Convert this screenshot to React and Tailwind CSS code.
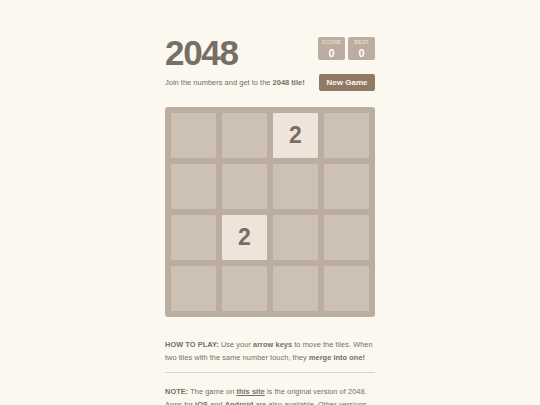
import React from "react";

const board = [
  [0, 0, 2, 0],
  [0, 0, 0, 0],
  [0, 2, 0, 0],
  [0, 0, 0, 0],
];

function ScoreBox({ label, value }) {
  return (
    <div className="bg-[#bbada0] rounded-[2px] w-[27px] h-[23px] flex flex-col items-center pt-[3px]">
      <span className="text-[5.5px] leading-none text-[#eee4da] uppercase">{label}</span>
      <span className="text-[11px] leading-none font-bold text-white mt-[2px]">{value}</span>
    </div>
  );
}

export default function App() {
  return (
    <div
      className="min-h-screen bg-[#faf8ef] text-[#776e65] overflow-hidden"
      style={{ fontFamily: '"Liberation Sans", Arial, sans-serif' }}
    >
      <div className="w-[210px] mx-auto pt-[30px]">
        {/* Header */}
        <div className="flex justify-between items-start">
          <h1 className="text-[35px] font-bold leading-[45px] tracking-[-1.3px]">2048</h1>
          <div className="flex gap-[3px] mt-[7px]">
            <ScoreBox label="Score" value="0" />
            <ScoreBox label="Best" value="0" />
          </div>
        </div>

        <div className="flex justify-between items-center mt-[-1px]">
          <p className="text-[7.5px]">
            Join the numbers and get to the <b>2048 tile!</b>
          </p>
          <button className="bg-[#8f7a66] text-[#f9f6f2] font-bold text-[8px] rounded-[2px] w-[56px] h-[17px]">
            New Game
          </button>
        </div>

        {/* Board */}
        <div className="mt-[16px] bg-[#bbada0] rounded-[3px] p-[6px] grid grid-cols-4 gap-[6px]">
          {board.flat().map((v, i) => (
            <div
              key={i}
              className={
                v
                  ? "h-[45px] rounded-[1px] bg-[#eee4da] flex items-center justify-center text-[23px] font-bold"
                  : "h-[45px] rounded-[1px] bg-[#cdc1b4]"
              }
            >
              {v ? v : null}
            </div>
          ))}
        </div>

        {/* Footer text */}
        <p className="mt-[21px] text-[7.4px] leading-[13px] tracking-[0.05px]">
          <b>HOW TO PLAY:</b> Use your <b>arrow keys</b> to move the tiles. When two tiles with the same number touch, they <b>merge into one!</b>
        </p>
        <hr className="border-0 border-t border-[#d8d4d0] mt-[8px] mb-[12px]" />
        <p className="text-[7.4px] leading-[13px] tracking-[0.05px]">
          <b>NOTE:</b> The game on <a className="underline font-bold">this site</a> is the original version of 2048. Apps for <b>iOS</b> and <b>Android</b> are also available. Other versions are derivatives or fakes, and should be used with caution.
        </p>
      </div>
    </div>
  );
}
